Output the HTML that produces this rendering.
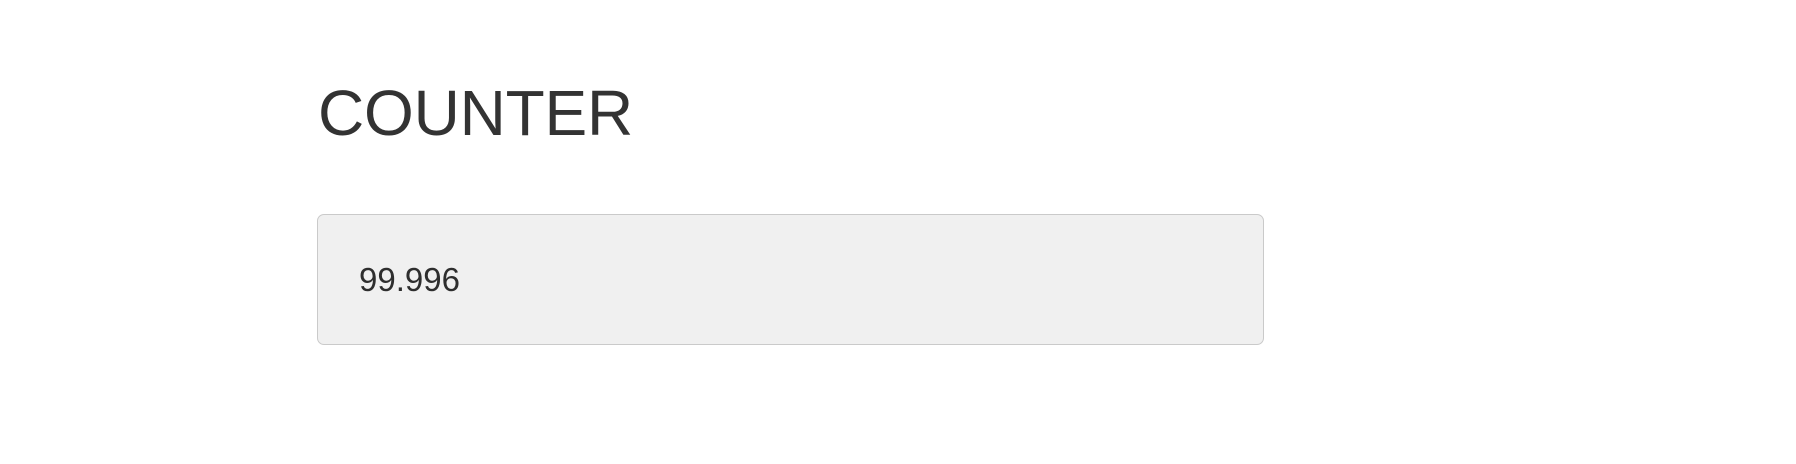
<!DOCTYPE html>
<html><head><style>
html,body{margin:0;padding:0;background:#fff;width:1796px;height:464px;overflow:hidden}
body{font-family:"Liberation Sans",sans-serif;color:#2b2b2b;position:relative}
h1{position:absolute;left:318px;top:76px;margin:0;font-size:64px;font-weight:normal;line-height:74px;letter-spacing:-0.2px;color:#333}
.box{position:absolute;left:317px;top:214px;width:947px;height:131px;background:#f0f0f0;border:1.5px solid #cacaca;border-radius:7px;box-sizing:border-box}
.v{position:absolute;left:359px;top:262px;font-size:33px;line-height:36px;color:#2e2e2e}
</style></head><body>
<h1>COUNTER</h1>
<div class="box"></div>
<div class="v">99.996</div>
</body></html>
